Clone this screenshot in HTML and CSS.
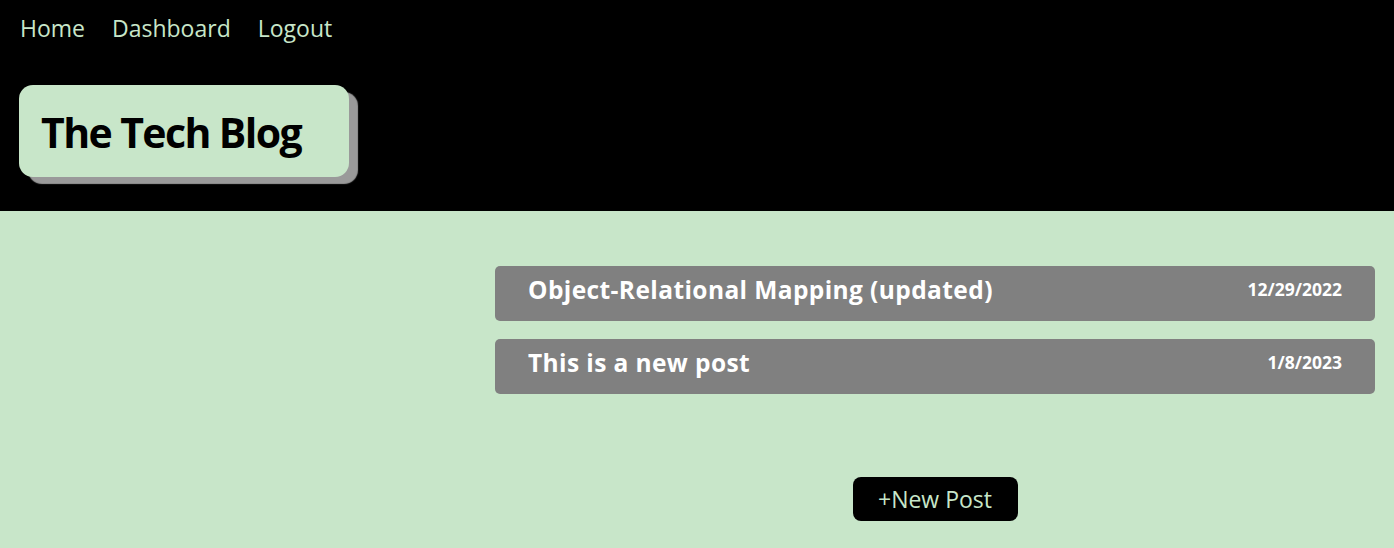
FILE: index.html
```html
<!DOCTYPE html>
<html>
<head>
<meta charset="utf-8">
<link rel="stylesheet" href="styles.css">
</head>
<body>
<header class="site-header">
  <nav class="nav">
    <a href="#" class="nav-link">Home</a>
    <a href="#" class="nav-link">Dashboard</a>
    <a href="#" class="nav-link">Logout</a>
  </nav>
  <div class="brand">
    <h1 class="brand-title">The Tech Blog</h1>
  </div>
</header>
<main class="main">
  <section class="posts">
    <article class="post">
      <h2 class="post-title">Object-Relational Mapping (updated)</h2>
      <span class="post-date">12/29/2022</span>
    </article>
    <article class="post">
      <h2 class="post-title">This is a new post</h2>
      <span class="post-date">1/8/2023</span>
    </article>
    <div class="actions">
      <button class="new-post">+New Post</button>
    </div>
  </section>
</main>
</body>
</html>
```

FILE: styles.css
```css
* { box-sizing: border-box; }
html, body { margin: 0; padding: 0; }
body {
  font-family: "Open Sans", "Noto Sans", sans-serif;
  background: #c8e6c9;
  height: 548px;
  overflow: hidden;
}
.site-header {
  background: #000;
  height: 211px;
  padding: 10px 19px 0;
}
.nav {
  display: flex;
  gap: 27px;
  padding-left: 1px;
  height: 36px;
}
.nav-link {
  color: #c8e6c9;
  text-decoration: none;
  font-size: 23px;
  line-height: 36px;
}
.brand {
  margin-top: 39px;
  width: 330px;
  height: 92px;
  background: #c8e6c9;
  border-radius: 14px;
  box-shadow: 9px 7px 1px #9a9a9a;
  display: flex;
  align-items: center;
  padding-left: 22px;
}
.brand-title {
  margin: 2px 0 0;
  font-size: 41px;
  font-weight: 700;
  color: #000;
  line-height: 1;
  letter-spacing: -1.6px;
}
.main {
  display: flex;
  justify-content: flex-end;
  padding: 55px 19px 0;
}
.posts {
  width: 880px;
  display: flex;
  flex-direction: column;
  gap: 18px;
}
.post {
  background: #808080;
  border-radius: 5px;
  height: 55px;
  display: flex;
  justify-content: space-between;
  align-items: flex-start;
  padding: 7px 33px 0;
  color: #fff;
}
.post-title {
  margin: 0;
  font-size: 24.5px;
  font-weight: 700;
  line-height: 34px;
  letter-spacing: 0.4px;
}
.post-date {
  font-size: 17.5px;
  font-weight: 700;
  line-height: 33px;
}
.actions {
  display: flex;
  justify-content: center;
  margin-top: 65px;
}
.new-post {
  background: #000;
  color: #c8e6c9;
  border: none;
  border-radius: 8px;
  width: 165px;
  height: 44px;
  font-family: inherit;
  font-size: 23px;
  padding: 0;
}
```
